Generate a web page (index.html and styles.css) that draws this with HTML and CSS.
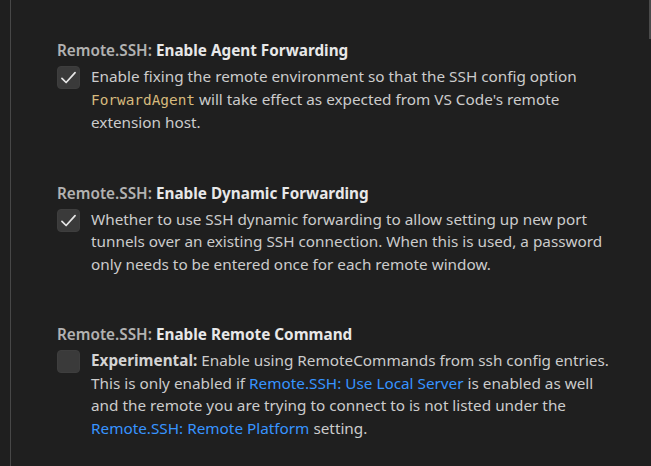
FILE: index.html
```html
<!DOCTYPE html>
<html>
<head>
<meta charset="utf-8">
<link rel="stylesheet" href="styles.css">
</head>
<body>
<div class="editor">
  <div class="panel">
    <div class="setting">
      <div class="title"><span class="cat">Remote.SSH: </span><span class="label">Enable Agent Forwarding</span></div>
      <div class="row">
        <div class="check on"><svg viewBox="0 0 16 16" width="21" height="21"><path d="M3 8.6 L6.2 11.8 L13 4.3" fill="none" stroke="#e6e6e6" stroke-width="1.3" stroke-linecap="round" stroke-linejoin="round"/></svg></div>
        <div class="desc">Enable fixing the remote environment so that the SSH config option <code>ForwardAgent</code> will take effect as expected from VS Code's remote extension host.</div>
      </div>
    </div>
    <div class="setting">
      <div class="title"><span class="cat">Remote.SSH: </span><span class="label">Enable Dynamic Forwarding</span></div>
      <div class="row">
        <div class="check on"><svg viewBox="0 0 16 16" width="21" height="21"><path d="M3 8.6 L6.2 11.8 L13 4.3" fill="none" stroke="#e6e6e6" stroke-width="1.3" stroke-linecap="round" stroke-linejoin="round"/></svg></div>
        <div class="desc">Whether to use SSH dynamic forwarding to allow setting up new port tunnels over an existing SSH connection. When this is used, a password only needs to be entered once for each remote window.</div>
      </div>
    </div>
    <div class="setting">
      <div class="title"><span class="cat">Remote.SSH: </span><span class="label">Enable Remote Command</span></div>
      <div class="row">
        <div class="check"></div>
        <div class="desc"><strong>Experimental:</strong> Enable using RemoteCommands from ssh config entries. This is only enabled if <a class="link">Remote.SSH: Use Local Server</a> is enabled as well and the remote you are trying to connect to is not listed under the <a class="link">Remote.SSH: Remote Platform</a> setting.</div>
      </div>
    </div>
  </div>
  <div class="scrollbar"></div>
</div>
</body>
</html>
```
FILE: styles.css
```css
html, body {
  margin: 0;
  padding: 0;
  background: #1f1f1f;
  height: 100%;
  overflow: hidden;
}
.editor {
  position: relative;
  height: 466px;
  padding-left: 10px;
}
.panel {
  height: 100%;
  box-sizing: border-box;
  border-left: 1px solid #474747;
  padding: 39px 0 0 46px;
  font-family: "Noto Sans", "Open Sans", sans-serif;
  font-size: 15.3px;
  color: #cccccc;
}
.setting {
  padding-bottom: 48px;
}
.title {
  line-height: 23px;
  white-space: nowrap;
}
.cat {
  color: #c2c2c2;
  font-weight: 600;
  opacity: 0.9;
}
.label {
  font-weight: 700;
  color: #e8e8e8;
}
.row {
  display: flex;
  align-items: flex-start;
  gap: 11px;
  margin-top: 3px;
}
.check {
  flex: none;
  width: 23px;
  height: 23px;
  box-sizing: border-box;
  border-radius: 4px;
  background: #3a3a3a;
  border: 1px solid #3e3e3e;
  margin-top: 1px;
  display: flex;
  align-items: center;
  justify-content: center;
}
.desc {
  width: 524px;
  line-height: 22.5px;
  color: #cccccc;
}
.desc strong {
  font-weight: 700;
  color: #d4d4d4;
}
code {
  font-family: "DejaVu Sans Mono", "Liberation Mono", monospace;
  font-size: 14.4px;
  color: #d7ba7d;
}
.link {
  color: #3794ff;
  text-decoration: none;
}
.scrollbar {
  position: absolute;
  top: 0;
  right: 0;
  width: 2px;
  height: 39px;
  background: #4a4a4a;
}
```
